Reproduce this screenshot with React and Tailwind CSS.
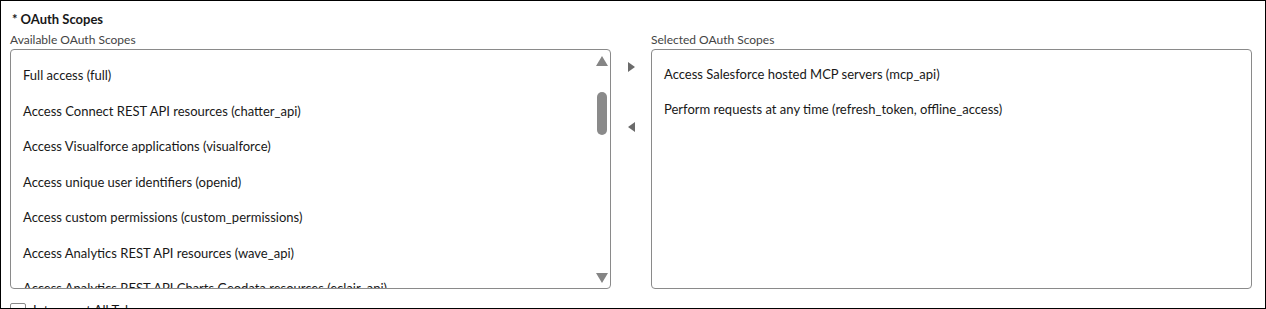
import React from 'react'

const available = [
  'Full access (full)',
  'Access Connect REST API resources (chatter_api)',
  'Access Visualforce applications (visualforce)',
  'Access unique user identifiers (openid)',
  'Access custom permissions (custom_permissions)',
  'Access Analytics REST API resources (wave_api)',
  'Access Analytics REST API Charts Geodata resources (eclair_api)',
  'Manage user data via APIs (api)',
]

const selected = [
  'Access Salesforce hosted MCP servers (mcp_api)',
  'Perform requests at any time (refresh_token, offline_access)',
]

const Tri = ({ dir, className }) => {
  const pts = {
    up: '0,10 6,0 12,10',
    down: '0,0 12,0 6,10',
    right: '0,0 7,5 0,10',
    left: '7,0 0,5 7,10',
  }[dir]
  const w = dir === 'up' || dir === 'down' ? 12 : 7
  return (
    <svg width={w} height="10" viewBox={`0 0 ${w} 10`} className={className}>
      <polygon points={pts} fill="currentColor" />
    </svg>
  )
}

const App = () => {
  return (
    <div
      className="w-[1266px] h-[309px] bg-white border border-black overflow-hidden px-[9px] pt-[10px] text-[#181818]"
      style={{ fontFamily: 'Lato, "Noto Sans", sans-serif' }}
    >
      {/* Title */}
      <div className="h-[16px] text-[13px] font-bold leading-[16px] pl-[2px] whitespace-nowrap">
        <span className="mr-[3px]">*</span>OAuth Scopes
      </div>

      <div className="flex mt-[4px]">
        {/* Available */}
        <div className="w-[601px]">
          <div className="text-[12px] leading-[18px] text-[#444]">Available OAuth Scopes</div>
          <div className="h-[240px] border border-[#8a8a8a] rounded-[4px] flex overflow-hidden">
            <ul className="flex-1 overflow-hidden pt-[8px] pl-[12px]">
              {available.map((s) => (
                <li key={s} className="h-[35.5px] flex items-center text-[13px] whitespace-nowrap">
                  {s}
                </li>
              ))}
            </ul>
            <div className="w-[17px] flex flex-col items-center pt-[6px] pb-[5px] text-[#858585]">
              <Tri dir="up" />
              <div className="w-[10px] h-[43px] mt-[26px] rounded-full bg-[#8a8a8a]" />
              <div className="flex-1" />
              <Tri dir="down" />
            </div>
          </div>
        </div>

        {/* Move buttons */}
        <div className="w-[40px] flex flex-col items-center pt-[31px] text-[#6b6b6b]">
          <Tri dir="right" />
          <Tri dir="left" className="mt-[50px]" />
        </div>

        {/* Selected */}
        <div className="w-[601px]">
          <div className="text-[12px] leading-[18px] text-[#444]">Selected OAuth Scopes</div>
          <div className="h-[240px] border border-[#8a8a8a] rounded-[4px] pt-[7px] pl-[12px]">
            {selected.map((s) => (
              <div key={s} className="h-[35px] flex items-center text-[13px] whitespace-nowrap">
                {s}
              </div>
            ))}
          </div>
        </div>
      </div>

      {/* Checkbox row */}
      <label className="flex items-center gap-[7px] mt-[12px] text-[13px]">
        <span className="w-[16px] h-[16px] border border-[#8a8a8a] rounded-[2px] bg-white shrink-0" />
        Introspect All Tokens
      </label>
    </div>
  )
}

export default App
